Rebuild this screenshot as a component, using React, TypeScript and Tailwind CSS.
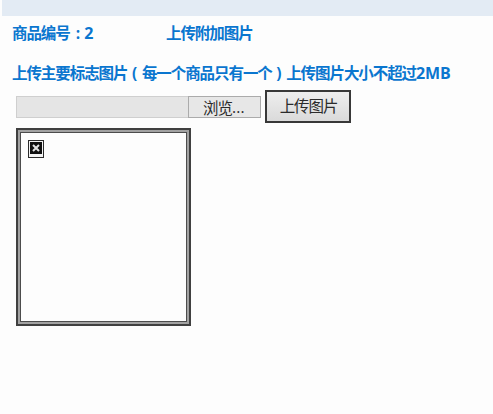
function MissingImage() {
  return (
    <svg width="16" height="18" viewBox="0 0 16 18" shapeRendering="crispEdges" className="block">
      <rect x="0" y="0" width="16" height="18" fill="#2b2b2b" />
      <rect x="1" y="1" width="14" height="16" fill="#f4f4f4" />
      <rect x="2" y="2" width="12" height="12" fill="#101010" />
      <path d="M5 5 L11 11 M11 5 L5 11" stroke="#e4e4e4" strokeWidth="2" shapeRendering="auto" />
    </svg>
  );
}

const label =
  "whitespace-nowrap text-[15.5px] leading-5 font-bold tracking-[-1.07px] text-[#0a76cf] font-['Noto_Sans_CJK_SC',sans-serif]";
const latin = "inline-block font-['Open_Sans',sans-serif] text-[16px] tracking-[-0.1px]";
const mark = "inline-block w-[14.43px] text-center font-['Open_Sans',sans-serif] tracking-normal";

export default function App() {
  return (
    <div className="h-[414px] w-[493px] overflow-hidden bg-[#fdfdfd]">
      <div className="ml-0.5 h-4 bg-[#e3ebf4]" />
      <div className="mt-1.5 flex h-5 pl-3">
        <div className={`w-[154px] ${label}`}>
          商品编号<span className={`pl-0.5 ${mark}`}>:</span>
          <span className={latin}>2</span>
        </div>
        <div className={label}>上传附加图片</div>
      </div>
      <div className={`mt-5 h-5 pl-3 ${label}`}>
        上传主要标志图片<span className={mark}>(</span>每一个商品只有一个
        <span className={mark}>)</span>上传图片大小不超过
        <span className={latin}>2MB</span>
      </div>
      <div className="mt-2 flex h-[33px] items-start pl-4 font-['Noto_Sans_CJK_SC',sans-serif] text-[15.5px] font-normal tracking-[-1.07px] text-[#2b2b2b]">
        <div className="mt-1.5 flex h-[22px] w-[245px]">
          <div className="w-[172px] border border-r-0 border-[#cfcfcf] bg-[#e5e5e5]" />
          <button className="flex w-[73px] items-center border border-[#ababab] bg-[#e7e7e7] pb-px pl-3.5 leading-5">
            浏览<span className="font-['Open_Sans',sans-serif] tracking-[0.3px]">...</span>
          </button>
        </div>
        <button className="ml-1 flex h-[33px] w-[86px] items-center justify-center border-2 border-[#383838] bg-linear-to-b from-[#eeeeee] to-[#dadada] pb-1 pl-px leading-5">
          上传图片
        </button>
      </div>
      <div className="ml-4 mt-[5px] h-[198px] w-[175px] border-2 border-[#404040] bg-[#fdfdfd]">
        <div className="h-full border-2 border-[#a2a2a2]">
          <div className="h-full border border-[#4c4c4c] pl-[7px] pt-[7px]">
            <MissingImage />
          </div>
        </div>
      </div>
    </div>
  );
}
